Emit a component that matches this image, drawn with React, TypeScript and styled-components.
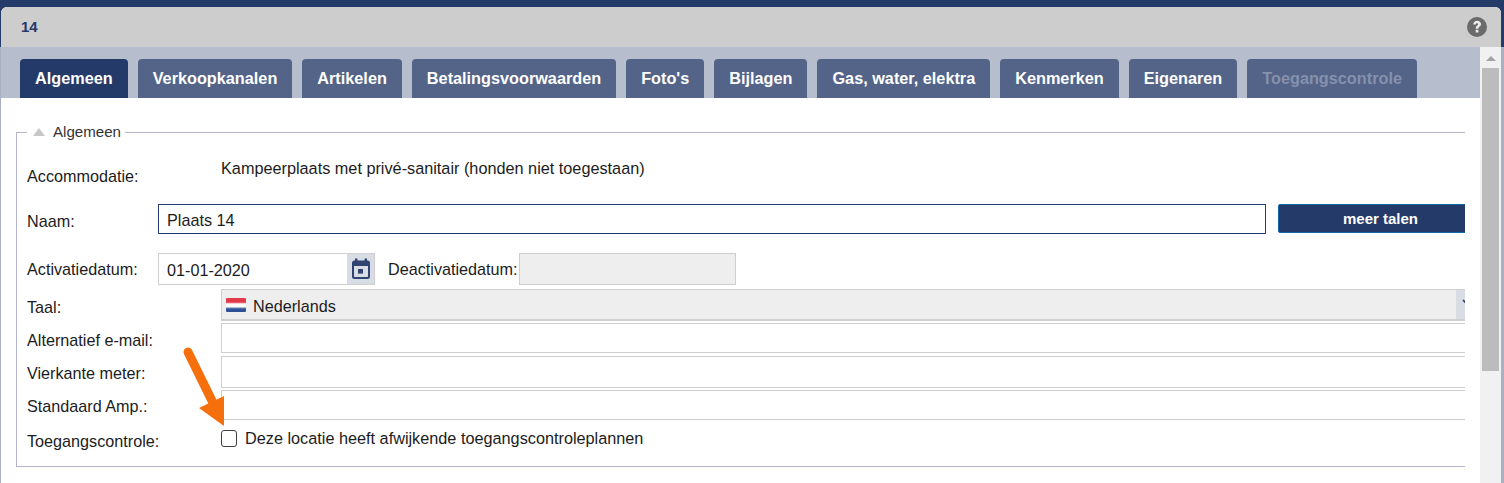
import React, { FC } from "react";
import styled, { createGlobalStyle } from "styled-components";

const GlobalStyle = createGlobalStyle`
  html, body {
    margin: 0;
    padding: 0;
    overflow: hidden;
  }
  body {
    font-family: "Liberation Sans", Arial, sans-serif;
    color: #1c1c1c;
  }
  * {
    box-sizing: border-box;
  }
`;

const Page = styled.div`
  position: relative;
  width: 1504px;
  height: 483px;
  overflow: hidden;
  padding: 7px 3px 0 1px;
  background: linear-gradient(#243a69 0, #243a69 47px, #a8b0c2 47px, #a8b0c2 100%);
`;

const Modal = styled.div`
  height: 476px;
  display: flex;
  flex-direction: column;
  background: #fff;
  border-radius: 6px 6px 0 0;
  overflow: hidden;
`;

const TitleBar = styled.div`
  flex: none;
  height: 40px;
  padding: 0 14px 0 20px;
  display: flex;
  align-items: center;
  justify-content: space-between;
  background: #cdcdcd;
`;

const Title = styled.div`
  padding-bottom: 2px;
  font-size: 15px;
  font-weight: 700;
  color: #243a69;
`;

const Body = styled.div`
  flex: 1;
  min-height: 0;
  display: flex;
`;

const Main = styled.div`
  flex: 1;
  min-width: 0;
`;

const TabStrip = styled.div`
  height: 51px;
  padding: 12px 0 0 19px;
  display: flex;
  gap: 10px;
  background: #b6bdcd;
`;

const Tab = styled.div<{ $active?: boolean; $disabled?: boolean }>`
  height: 39px;
  padding: 0 15px;
  display: flex;
  align-items: center;
  border-radius: 4px 4px 0 0;
  font-size: 16.26px;
  font-weight: 700;
  white-space: nowrap;
  background: ${(p) => (p.$active ? "#243a69" : "#536488")};
  color: ${(p) => (p.$disabled ? "#8591ad" : "#fff")};
`;

const Content = styled.div`
  padding: 25px 15px 0;
`;

const Clip = styled.div`
  overflow: hidden;
`;

const Group = styled.fieldset`
  margin: 0 -30px 0 0;
  padding: 17px 0 0 10px;
  height: 344px;
  border: 1px solid #b4b4cc;
  min-width: 0;
`;

const Legend = styled.legend`
  margin-left: 0;
  padding: 0 4px 0 6px;
  height: 18px;
  display: flex;
  align-items: center;
  gap: 7px;
  font-size: 15.1px;
  color: #333;
`;

const Triangle = styled.span`
  width: 0;
  height: 0;
  border-left: 6.5px solid transparent;
  border-right: 6.5px solid transparent;
  border-bottom: 8px solid #c8c8c8;
`;

const LegendText = styled.span`
  margin: -2px 0 0 1px;
`;

const Row = styled.div<{ $top?: number; $height: number }>`
  display: flex;
  align-items: flex-start;
  margin-top: ${(p) => p.$top ?? 0}px;
  height: ${(p) => p.$height}px;
`;

const Label = styled.div<{ $width: number; $offset: number }>`
  flex: none;
  width: ${(p) => p.$width}px;
  padding-top: ${(p) => p.$offset}px;
  font-size: 16.2px;
  line-height: 18px;
  white-space: nowrap;
`;

const StaticValue = styled.div`
  font-size: 16.25px;
  line-height: 18px;
  padding-top: 1px;
`;

const TextInput = styled.div<{ $strong?: boolean; $muted?: boolean; $width?: number }>`
  flex: ${(p) => (p.$width ? "none" : 1)};
  width: ${(p) => (p.$width ? `${p.$width}px` : "auto")};
  height: 100%;
  padding: ${(p) => (p.$strong ? "2px 8px 0" : "0 8px")};
  display: flex;
  align-items: center;
  font-size: 16.2px;
  border: 1px solid ${(p) => (p.$strong ? "#243a69" : "#cfcfcf")};
  background: ${(p) => (p.$muted ? "#eeeeee" : "#fff")};
`;

const MoreButton = styled.div`
  flex: none;
  width: 200px;
  height: 29px;
  margin-left: 12px;
  display: flex;
  align-items: center;
  padding-left: 64px;
  border: 1px solid #0f69a8;
  border-radius: 2px;
  background: #243a69;
  color: #fff;
  font-size: 15px;
  font-weight: 700;
`;

const DateField = styled.div`
  flex: none;
  width: 217px;
  height: 32px;
  display: flex;
  border: 1px solid #cfcfcf;
`;

const DateValue = styled.div`
  flex: 1;
  padding: 2px 0 0 8px;
  display: flex;
  align-items: center;
  font-size: 16.2px;
`;

const DateButton = styled.div`
  flex: none;
  width: 27px;
  display: flex;
  align-items: center;
  justify-content: center;
  background: #d8dce5;
`;

const InlineLabel = styled.div`
  flex: none;
  width: 131px;
  margin-left: 13px;
  padding-top: 7px;
  font-size: 16.2px;
  line-height: 18px;
  white-space: nowrap;
`;

const SelectBox = styled.div`
  width: 1265px;
  flex: none;
  height: 100%;
  padding-left: 4px;
  display: flex;
  align-items: center;
  gap: 7px;
  font-size: 16.2px;
  border: 1px solid #cfcfcf;
  border-bottom-width: 2px;
  background: #eeeeee;
`;

const Flag = styled.span`
  width: 20px;
  height: 14px;
  border-radius: 1px;
  background: linear-gradient(#e4394a 0 30%, #fbfbfb 42% 62%, #2c4f96 78% 100%);
`;

const SelectText = styled.span`
  flex: 1;
  padding-top: 4px;
`;

const SelectArrow = styled.div`
  flex: none;
  width: 29px;
  height: 100%;
  padding: 9px 0 0 6px;
  background: #d8dce5;
`;

const Chevron = styled.svg`
  display: block;
`;

const CheckRow = styled.div`
  display: flex;
  align-items: center;
  gap: 8px;
  font-size: 16.25px;
  line-height: 18px;
  white-space: nowrap;
`;

const CheckBox = styled.span`
  width: 16px;
  height: 17px;
  border: 1.5px solid #3f3f3f;
  border-radius: 3px;
  background: #fff;
`;

const ScrollTrack = styled.div`
  flex: none;
  width: 21px;
  display: flex;
  flex-direction: column;
  align-items: center;
  background: #f1f1f1;
`;

const ScrollUp = styled.span`
  margin-top: 9px;
  width: 0;
  height: 0;
  border-left: 5px solid transparent;
  border-right: 5px solid transparent;
  border-bottom: 5px solid #a3a3a3;
`;

const ScrollThumb = styled.div`
  margin-top: 7px;
  width: 17px;
  height: 303px;
  background: #bcbcbc;
`;

const Arrow = styled.svg`
  position: absolute;
  left: 180px;
  top: 340px;
`;

const tabs = [
  "Algemeen",
  "Verkoopkanalen",
  "Artikelen",
  "Betalingsvoorwaarden",
  "Foto's",
  "Bijlagen",
  "Gas, water, elektra",
  "Kenmerken",
  "Eigenaren",
  "Toegangscontrole",
];

const HelpIcon: FC = () => (
  <svg width="20" height="20" viewBox="0 0 20 20">
    <circle cx="10" cy="10" r="10" fill="#6b6b6b" />
    <path
      d="M6.2 7.4C6.5 5 8 3.8 10.1 3.8c2.2 0 3.9 1.3 3.9 3.3 0 2.7-2.6 2.7-2.6 4.7H8.7c0-3.2 2.4-3.2 2.4-4.6 0-.6-.4-1-1.1-1-.8 0-1.2.5-1.3 1.4z"
      fill="#ececec"
    />
    <rect x="8.7" y="12.8" width="2.7" height="2.7" fill="#ececec" />
  </svg>
);

const CalendarIcon: FC = () => (
  <svg width="20" height="22" viewBox="0 0 20 22">
    <rect x="4" y="0.5" width="2.4" height="4" fill="#2f4470" />
    <rect x="13.6" y="0.5" width="2.4" height="4" fill="#2f4470" />
    <path
      d="M3.5 2.5h13A2.5 2.5 0 0 1 19 5v13.5a2.5 2.5 0 0 1-2.5 2.5h-13A2.5 2.5 0 0 1 1 18.5V5a2.5 2.5 0 0 1 2.5-2.5zM3 8v10.5c0 .3.2.5.5.5h13c.3 0 .5-.2.5-.5V8z"
      fill="#2f4470"
    />
    <rect x="7" y="11" width="5" height="4.6" fill="#2f4470" />
  </svg>
);

const App: FC = () => {
  return (
    <Page>
      <GlobalStyle />
      <Modal>
        <TitleBar>
          <Title>14</Title>
          <HelpIcon />
        </TitleBar>
        <Body>
          <Main>
            <TabStrip>
              {tabs.map((t, i) => (
                <Tab key={t} $active={i === 0} $disabled={t === "Toegangscontrole"}>
                  {t}
                </Tab>
              ))}
            </TabStrip>
            <Content>
              <Clip>
                <Group>
                  <Legend>
                    <Triangle />
                    <LegendText>Algemeen</LegendText>
                  </Legend>
                  <Row $height={28}>
                    <Label $width={194} $offset={9}>Accommodatie:</Label>
                    <StaticValue>Kampeerplaats met privé-sanitair (honden niet toegestaan)</StaticValue>
                  </Row>
                  <Row $top={18} $height={30}>
                    <Label $width={131} $offset={8}>Naam:</Label>
                    <TextInput $strong $width={1108}>Plaats 14</TextInput>
                    <MoreButton>meer talen</MoreButton>
                  </Row>
                  <Row $top={19} $height={32}>
                    <Label $width={131} $offset={7}>Activatiedatum:</Label>
                    <DateField>
                      <DateValue>01-01-2020</DateValue>
                      <DateButton>
                        <CalendarIcon />
                      </DateButton>
                    </DateField>
                    <InlineLabel>Deactivatiedatum:</InlineLabel>
                    <TextInput $muted $width={217} />
                  </Row>
                  <Row $top={4} $height={32}>
                    <Label $width={194} $offset={9}>Taal:</Label>
                    <SelectBox>
                      <Flag />
                      <SelectText>Nederlands</SelectText>
                      <SelectArrow>
                        <Chevron width="10" height="8" viewBox="0 0 10 8">
                          <path d="M1 1l4 4 4-4" fill="none" stroke="#243a69" strokeWidth="1.6" />
                        </Chevron>
                      </SelectArrow>
                    </SelectBox>
                  </Row>
                  <Row $top={2} $height={30}>
                    <Label $width={194} $offset={8}>Alternatief e-mail:</Label>
                    <TextInput />
                  </Row>
                  <Row $top={3} $height={32}>
                    <Label $width={194} $offset={8}>Vierkante meter:</Label>
                    <TextInput />
                  </Row>
                  <Row $top={2} $height={30}>
                    <Label $width={194} $offset={7}>Standaard Amp.:</Label>
                    <TextInput />
                  </Row>
                  <Row $top={9} $height={20}>
                    <Label $width={194} $offset={3}>Toegangscontrole:</Label>
                    <CheckRow>
                      <CheckBox />
                      Deze locatie heeft afwijkende toegangscontroleplannen
                    </CheckRow>
                  </Row>
                </Group>
              </Clip>
            </Content>
          </Main>
          <ScrollTrack>
            <ScrollUp />
            <ScrollThumb />
          </ScrollTrack>
        </Body>
      </Modal>
      <Arrow width="50" height="90" viewBox="0 0 50 90">
        <path d="M8 12L36 69" stroke="#f56f0c" strokeWidth="9" strokeLinecap="round" fill="none" />
        <path d="M19 68L44 56V86z" fill="#f56f0c" />
      </Arrow>
    </Page>
  );
};

export default App;
